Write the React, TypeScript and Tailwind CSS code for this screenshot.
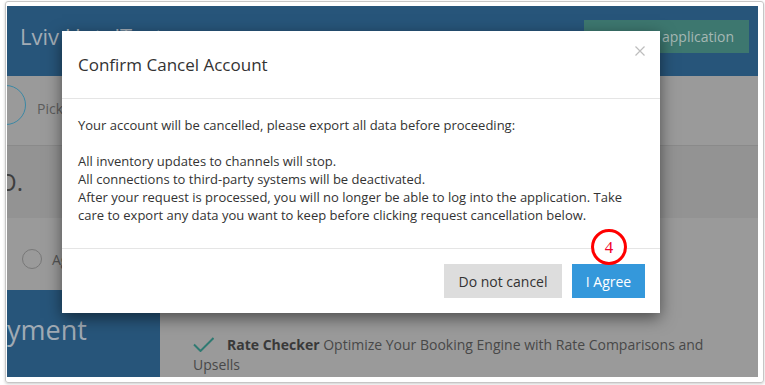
export default function App() {
  return (
    <div className="w-[765px] h-[385px] bg-white font-['Open_Sans',sans-serif] overflow-hidden">
      <div className="ml-[5px] mt-[1px] w-[759px] h-[382px] border border-[#c6c6c6] rounded-[3px] shadow-[0_1px_3px_rgba(0,0,0,0.2)] pl-[1px] pt-[4px]">
        <div className="relative w-[751px] h-[371px] overflow-hidden bg-[#9a9a9a] flex flex-col">
          {/* page behind the dialog */}
          <header className="h-[70px] shrink-0 bg-[#27557a] flex items-start justify-between pl-[13px] pr-[9px] pt-[14px]">
            <h1 className="text-[22px] leading-[32px] text-[#a3acb5] whitespace-nowrap">Lviv HotelTest</h1>
            <button className="w-[165px] h-[33px] bg-[#3d776f] text-[#a6b8b4] text-[14px] flex items-center justify-end pr-[15px] whitespace-nowrap">
              Return to application
            </button>
          </header>

          <div className="h-[69px] shrink-0 flex items-start pt-[9px]">
            <div className="w-[40px] h-[40px] -ml-[21px] shrink-0 rounded-full border-[1.5px] border-[#3a88a5]" />
            <span className="ml-[11px] mt-[14px] text-[14px] leading-[20px] text-[#5c5c5c]">Pick</span>
          </div>

          <div className="h-[73px] shrink-0 bg-[#939393] border-t border-[#8a8a8a] pt-[21px]">
            <span className="block -ml-[9px] text-[24px] leading-[30px] text-[#3e3e3e]">O.</span>
          </div>

          <div className="h-[72px] shrink-0 flex items-center pl-[15px]">
            <div className="w-[20px] h-[20px] rounded-full border-[1.5px] border-[#787878] mt-[10px]" />
            <span className="ml-[10px] mt-[10px] text-[14px] text-[#555]">Agree</span>
          </div>

          <div className="flex-1 flex">
            <div className="w-[153px] shrink-0 bg-[#27557a] pt-[22px]">
              <span className="block text-[27px] leading-[36px] text-[#a0aab4] whitespace-nowrap">yment</span>
            </div>
            <p className="flex-1 pl-[33px] pr-[40px] pt-[45px] text-[14px] leading-[20px] text-[#484848]">
              <svg width="21" height="15" viewBox="0 0 21 15" className="inline-block mr-[13px] -mt-[4px] align-middle">
                <path d="M1 7.5 L7.5 14 L20.5 1" fill="none" stroke="#2f7a72" strokeWidth="2" />
              </svg>
              <b className="font-bold text-[#393939]">Rate Checker</b> Optimize Your Booking Engine with Rate Comparisons and Upsells
            </p>
          </div>

          {/* dialog */}
          <div className="absolute left-[55px] top-[25px] w-[598px] bg-white shadow-[0_5px_15px_rgba(0,0,0,0.5)] text-[#333]">
            <div className="relative py-[22px] px-[16px] border-b border-[#e5e5e5]">
              <h2 className="text-[17px] leading-[23px]">Confirm Cancel Account</h2>
              <svg width="10" height="10" viewBox="0 0 10 10" className="absolute right-[15px] top-[15px]">
                <path d="M0.5 0.5 L9.5 9.5 M9.5 0.5 L0.5 9.5" stroke="#bdbdbd" strokeWidth="1.2" />
              </svg>
            </div>
            <div className="px-[16px] pt-[17px] pb-[24px] text-[13px] leading-[18px]">
              <p>Your account will be cancelled, please export all data before proceeding:</p>
              <p>&nbsp;</p>
              <p>All inventory updates to channels will stop.</p>
              <p>All connections to third-party systems will be deactivated.</p>
              <p>
                After your request is processed, you will no longer be able to log into the application. Take care to export any data you want to keep before clicking request cancellation below.
              </p>
            </div>
            <div className="border-t border-[#e5e5e5] pt-[15px] pb-[15px] pr-[15px] flex justify-end gap-[10px]">
              <button className="w-[118px] h-[34px] bg-[#dddddd] text-[#333] text-[14px]">Do not cancel</button>
              <button className="w-[73px] h-[34px] bg-[#3498db] text-white text-[14px]">I Agree</button>
            </div>
          </div>

          {/* annotation */}
          <div className="absolute left-[584px] top-[223px] w-[36px] h-[36px] rounded-full border-[3px] border-[#ff0000] bg-white flex items-center justify-center">
            <span className="font-['Liberation_Serif',serif] text-[17px] leading-none text-[#f0002a]">4</span>
          </div>
        </div>
      </div>
    </div>
  );
}
